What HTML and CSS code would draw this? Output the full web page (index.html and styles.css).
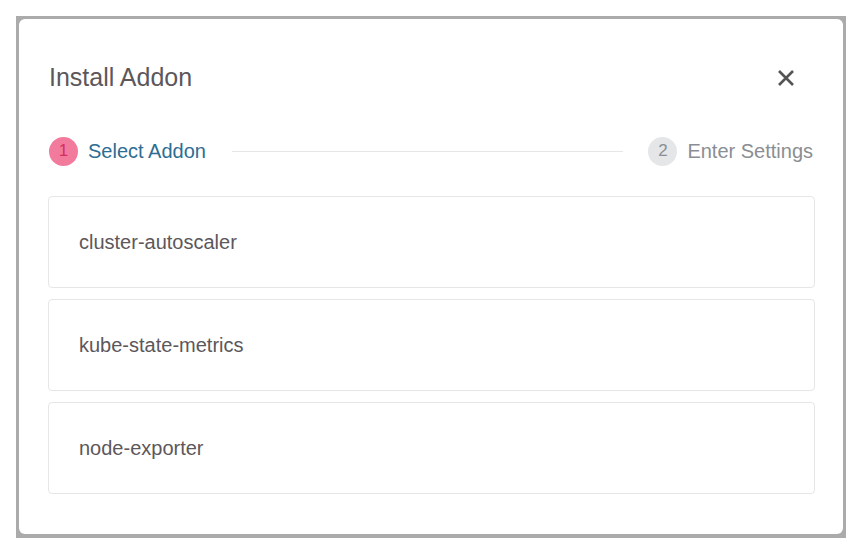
FILE: index.html
```html
<!DOCTYPE html>
<html>
<head>
<meta charset="utf-8">
<link rel="stylesheet" href="styles.css">
</head>
<body>
<div class="frame">
  <div class="modal">
    <div class="header">
      <h1 class="title">Install Addon</h1>
      <button class="close" aria-label="Close">
        <svg width="18" height="18" viewBox="0 0 18 18"><path d="M2 2L16 16M16 2L2 16" stroke="#545454" stroke-width="2.6" stroke-linecap="butt"/></svg>
      </button>
    </div>
    <div class="stepper">
      <div class="step active"><span class="num">1</span><span class="label">Select Addon</span></div>
      <div class="line"></div>
      <div class="step"><span class="num">2</span><span class="label">Enter Settings</span></div>
    </div>
    <div class="list">
      <div class="card">cluster-autoscaler</div>
      <div class="card">kube-state-metrics</div>
      <div class="card">node-exporter</div>
    </div>
  </div>
</div>
</body>
</html>
```
FILE: styles.css
```css
html, body { margin: 0; padding: 0; background: #fff; }
body { font-family: "Liberation Sans", Arial, sans-serif; }
.frame {
  margin: 16px 0 0 16px;
  width: 830px;
  height: 522px;
  background: #ababab;
  padding: 3px 3px 4px 3px;
  box-sizing: border-box;
}
.modal {
  background: #fff;
  border-radius: 6px;
  height: 100%;
  box-sizing: border-box;
  padding: 43px 28px 0 29px;
}
.header {
  display: flex;
  align-items: center;
  justify-content: space-between;
  height: 30px;
  padding-left: 1px;
}
.title {
  margin: 0;
  font-size: 25px;
  line-height: 30px;
  font-weight: normal;
  color: #5c575b;
}
.close {
  border: 0;
  background: none;
  padding: 0;
  margin-right: 20px;
  margin-top: 2px;
  width: 18px;
  height: 18px;
  display: flex;
}
.stepper {
  display: flex;
  align-items: center;
  margin-top: 44px;
  height: 30px;
  padding-left: 1px;
  padding-right: 2px;
}
.step {
  display: flex;
  align-items: center;
  font-size: 20px;
  line-height: 30px;
  color: #8a8e93;
}
.step .num {
  width: 29px;
  height: 29px;
  border-radius: 50%;
  background: #e4e6e8;
  color: #8a8e93;
  font-size: 17px;
  display: flex;
  align-items: center;
  justify-content: center;
  margin-right: 10px;
}
.step.active { color: #2d6d93; }
.step.active .num { background: #f27b9d; color: #d2305f; }
.line {
  flex: 1;
  height: 1px;
  background: #e6e6e6;
  margin: 0 25px 0 26px;
}
.list {
  margin-top: 30px;
  display: flex;
  flex-direction: column;
  gap: 11px;
}
.card {
  height: 92px;
  box-sizing: border-box;
  border: 1px solid #e6e6e6;
  border-radius: 4px;
  display: flex;
  align-items: center;
  padding-left: 30px;
  font-size: 20px;
  color: #5c575b;
}
```
